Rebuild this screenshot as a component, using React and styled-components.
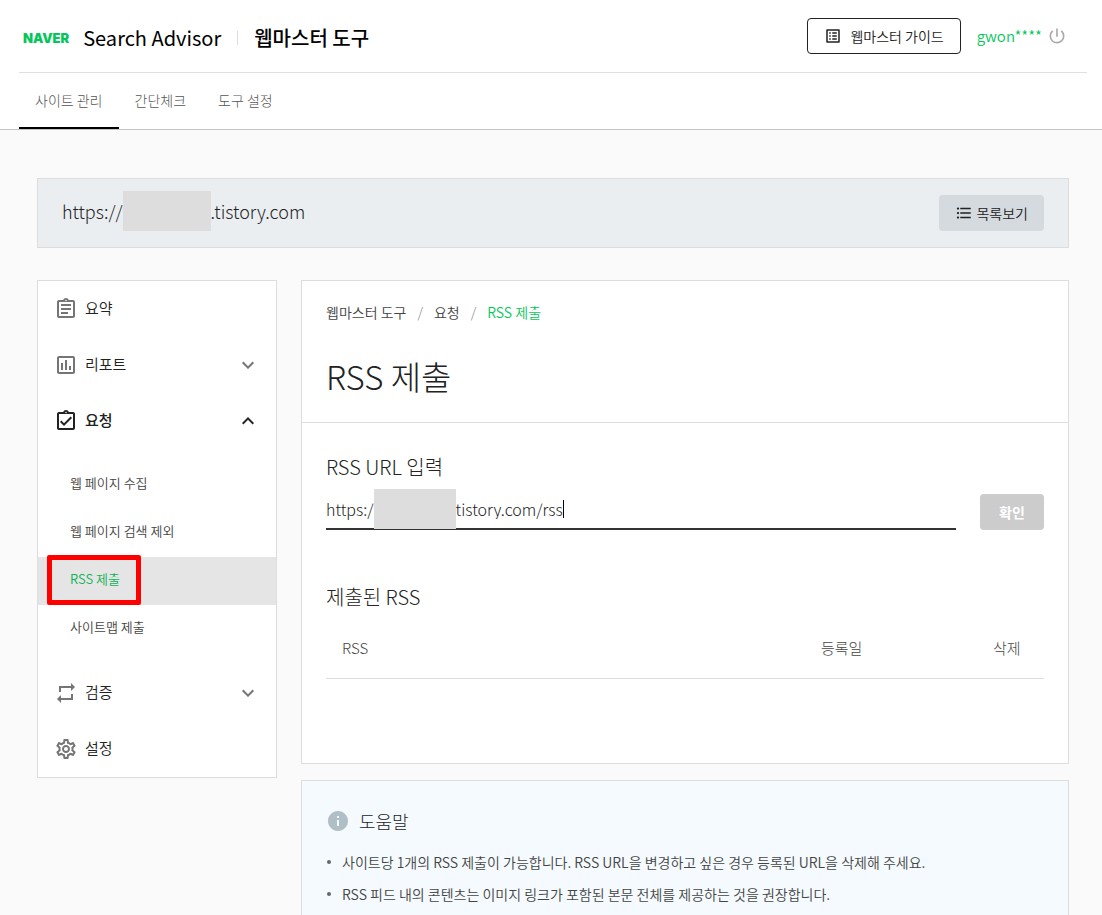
import React, { useState } from 'react';
import styled, { createGlobalStyle } from 'styled-components';
import {
  MdFormatListBulleted,
  MdInfo,
  MdKeyboardArrowDown,
  MdKeyboardArrowUp,
  MdListAlt,
  MdOutlineAssessment,
  MdOutlineAssignment,
  MdOutlineAssignmentTurnedIn,
  MdOutlineSettings,
  MdPowerSettingsNew,
  MdRepeat,
} from 'react-icons/md';

const tabs = ['사이트 관리', '간단체크', '도구 설정'];

const menu = [
  { label: '요약', icon: MdOutlineAssignment },
  { label: '리포트', icon: MdOutlineAssessment, group: true },
  {
    label: '요청',
    icon: MdOutlineAssignmentTurnedIn,
    group: true,
    children: ['웹 페이지 수집', '웹 페이지 검색 제외', 'RSS 제출', '사이트맵 제출'],
  },
  { label: '검증', icon: MdRepeat, group: true },
  { label: '설정', icon: MdOutlineSettings },
];

const tips = [
  '사이트당 1개의 RSS 제출이 가능합니다. RSS URL을 변경하고 싶은 경우 등록된 URL을 삭제해 주세요.',
  'RSS 피드 내의 콘텐츠는 이미지 링크가 포함된 본문 전체를 제공하는 것을 권장합니다.',
];

export default function App() {
  return (
    <>
      <GlobalStyle />
      <Header />
      <Content>
        <SiteBar>
          <SiteUrl>
            https://
            <Mask wide />
            .tistory.com
          </SiteUrl>
          <ListButton type="button">
            <MdFormatListBulleted size={18} />
            목록보기
          </ListButton>
        </SiteBar>
        <Columns>
          <Sidebar />
          <Main>
            <RssPanel />
            <Help />
          </Main>
        </Columns>
      </Content>
    </>
  );
}

function Header() {
  return (
    <HeaderWrap>
      <TopRow>
        <Brand>
          <Logo href="#">NAVER</Logo>
          <BrandLink href="#">Search Advisor</BrandLink>
          <Divider />
          <BrandLink href="#" strong>웹마스터 도구</BrandLink>
        </Brand>
        <Account>
          <GuideButton type="button">
            <MdListAlt size={18} />
            웹마스터 가이드
          </GuideButton>
          <UserLink href="#">gwon****</UserLink>
          <PowerButton type="button" aria-label="로그아웃">
            <MdPowerSettingsNew size={20} />
          </PowerButton>
        </Account>
      </TopRow>
      <Tabs>
        {tabs.map((tab, i) => (
          <Tab key={tab} href="#" active={i === 0}>{tab}</Tab>
        ))}
      </Tabs>
    </HeaderWrap>
  );
}

function Sidebar() {
  return (
    <Nav>
      {menu.map(({ label, icon: Icon, group, children }) => (
        <React.Fragment key={label}>
          <MenuItem type="button" open={!!children}>
            <Icon size={24} />
            <span>{label}</span>
            {group && (children ? <MdKeyboardArrowUp size={24} /> : <MdKeyboardArrowDown size={24} />)}
          </MenuItem>
          {children && (
            <SubMenu>
              {children.map(child => (
                <li key={child}>
                  <SubLink href="#" active={child === 'RSS 제출'}>
                    {child}
                    {child === 'RSS 제출' && <Marker />}
                  </SubLink>
                </li>
              ))}
            </SubMenu>
          )}
        </React.Fragment>
      ))}
    </Nav>
  );
}

function RssPanel() {
  const [url, setUrl] = useState('tistory.com/rss');
  return (
    <Panel>
      <PanelHead>
        <Crumbs>
          <li><Crumb href="#">웹마스터 도구</Crumb></li>
          <li><Crumb href="#">요청</Crumb></li>
          <li><Crumb href="#" current>RSS 제출</Crumb></li>
        </Crumbs>
        <Title>RSS 제출</Title>
      </PanelHead>
      <PanelBody>
        <FieldLabel htmlFor="rss-url">RSS URL 입력</FieldLabel>
        <FieldRow>
          <Field>
            <span>https:/</span>
            <Mask />
            <UrlInput id="rss-url" value={url} onChange={e => setUrl(e.target.value)} />
            <Caret />
          </Field>
          <ConfirmButton type="button">확인</ConfirmButton>
        </FieldRow>
        <SectionTitle>제출된 RSS</SectionTitle>
        <Table>
          <thead>
            <tr>
              <th>RSS</th>
              <DateCell>등록일</DateCell>
              <DeleteCell>삭제</DeleteCell>
            </tr>
          </thead>
        </Table>
      </PanelBody>
    </Panel>
  );
}

function Help() {
  return (
    <HelpPanel>
      <HelpTitle>
        <MdInfo size={24} />
        도움말
      </HelpTitle>
      <Tips>
        {tips.map(tip => <li key={tip}>{tip}</li>)}
      </Tips>
    </HelpPanel>
  );
}

const GlobalStyle = createGlobalStyle`
  * {
    box-sizing: border-box;
  }
  html {
    scrollbar-width: none;
  }
  body {
    margin: 0;
    background: #fafafa;
    color: #222;
    font-family: "Noto Sans CJK KR", sans-serif;
    font-size: 14px;
    font-weight: 300;
    line-height: 20px;
  }
  a {
    color: inherit;
    text-decoration: none;
  }
  button, input {
    padding: 0;
    border: 0;
    background: transparent;
    color: inherit;
    font: inherit;
  }
  button {
    cursor: pointer;
  }
  h1, h2, ul, ol {
    margin: 0;
    padding: 0;
    font-weight: inherit;
    list-style: none;
  }
`;

const HeaderWrap = styled.header`
  padding: 0 15px 0 19px;
  background: #fff;
  border-bottom: 1px solid #c4c4c4;
`;

const TopRow = styled.div`
  display: flex;
  align-items: center;
  justify-content: space-between;
  height: 73px;
  padding: 0 20px 0 4px;
  border-bottom: 1px solid #e0e0e0;
`;

const Brand = styled.div`
  display: flex;
  align-items: center;
  padding-top: 4px;
`;

const Logo = styled.a`
  margin-right: 14px;
  color: #03c75a;
  font-family: Inter, sans-serif;
  font-size: 13px;
  font-weight: 900;
`;

const BrandLink = styled.a`
  color: #000;
  font-size: 20px;
  font-weight: ${props => (props.strong ? 500 : 400)};
  line-height: 28px;
`;

const Divider = styled.span`
  width: 1px;
  height: 14px;
  margin: 0 16px;
  background: #ddd;
`;

const Account = styled.div`
  display: flex;
  align-items: center;
`;

const GuideButton = styled.button`
  display: flex;
  align-items: center;
  gap: 8px;
  height: 36px;
  padding: 0 16px;
  border: 1px solid #222;
  border-radius: 4px;
  font-weight: 350;
`;

const UserLink = styled.a`
  margin-left: 16px;
  color: #03c75a;
  font-size: 15px;
  font-weight: 350;
`;

const PowerButton = styled.button`
  display: flex;
  margin-left: 5px;
  color: #aaa;
`;

const Tabs = styled.nav`
  display: flex;
`;

const Tab = styled.a`
  height: 56px;
  padding: 0 16px;
  border-bottom: 2px solid ${props => (props.active ? '#000' : 'transparent')};
  color: #555;
  line-height: 54px;
`;

const Content = styled.div`
  padding: 48px 33px 24px 37px;
`;

const SiteBar = styled.div`
  display: flex;
  align-items: center;
  justify-content: space-between;
  height: 70px;
  padding: 0 24px;
  background: #eaeef1;
  border: 1px solid #ddd;
`;

const SiteUrl = styled.div`
  display: flex;
  align-items: center;
  padding-bottom: 4px;
  font-size: 18px;
`;

const Mask = styled.span`
  width: ${props => (props.wide ? 88 : 82)}px;
  height: 40px;
  background: #ddd;
`;

const ListButton = styled.button`
  display: flex;
  align-items: center;
  gap: 3px;
  height: 36px;
  padding: 0 16px;
  border-radius: 4px;
  background: #d5dade;
  font-weight: 350;
`;

const Columns = styled.div`
  display: flex;
  align-items: flex-start;
  gap: 24px;
  margin-top: 32px;
`;

const Nav = styled.nav`
  flex: 0 0 240px;
  background: #fff;
  border: 1px solid #ddd;
`;

const MenuItem = styled.button`
  display: flex;
  align-items: center;
  width: 100%;
  height: 56px;
  padding: 0 16px;
  font-size: 15px;
  font-weight: ${props => (props.open ? 500 : 350)};
  text-align: left;
  span {
    flex: 1;
    margin-left: 7px;
    padding-bottom: 3px;
  }
  svg {
    color: ${props => (props.open ? '#222' : '#757575')};
  }
`;

const SubMenu = styled.ul`
  padding: 12px 0;
`;

const SubLink = styled.a`
  display: block;
  position: relative;
  padding: 0 0 4px 32px;
  background: ${props => (props.active ? '#e5e5e5' : 'transparent')};
  color: ${props => (props.active ? '#0fb255' : '#444')};
  font-size: 13px;
  font-weight: 350;
  line-height: 44px;
`;

const Marker = styled.span`
  position: absolute;
  top: -2px;
  left: 9px;
  width: 94px;
  height: 50px;
  border: 5px solid #f00;
  border-radius: 2px;
`;

const Main = styled.main`
  flex: 1;
  min-width: 0;
`;

const Panel = styled.section`
  background: #fff;
  border: 1px solid #ddd;
`;

const PanelHead = styled.div`
  padding: 21px 24px 22px;
  border-bottom: 1px solid #ddd;
`;

const Crumbs = styled.ol`
  display: flex;
  li + li::before {
    content: "/";
    padding: 0 11px;
    color: #888;
  }
`;

const Crumb = styled.a`
  color: ${props => (props.current ? '#03c75a' : '#444')};
  font-weight: 350;
`;

const Title = styled.h1`
  margin-top: 30px;
  font-size: 33px;
  line-height: 48px;
`;

const PanelBody = styled.div`
  padding: 30px 24px 84px;
`;

const FieldLabel = styled.label`
  display: block;
  font-size: 20px;
  line-height: 28px;
`;

const FieldRow = styled.div`
  display: flex;
  align-items: flex-end;
  gap: 24px;
  margin-top: 8px;
`;

const Field = styled.div`
  display: flex;
  flex: 1;
  align-items: center;
  height: 41px;
  border-bottom: 2px solid #333;
  font-size: 16px;
`;

const UrlInput = styled.input`
  field-sizing: content;
  outline: none;
`;

const Caret = styled.span`
  width: 1px;
  height: 18px;
  background: #000;
`;

const ConfirmButton = styled.button`
  width: 64px;
  height: 36px;
  border-radius: 4px;
  background: #ccc;
  color: #fff;
  font-weight: 700;
`;

const SectionTitle = styled.h2`
  margin-top: 53px;
  font-size: 20px;
  line-height: 28px;
`;

const Table = styled.table`
  width: 100%;
  margin-top: 7px;
  border-collapse: collapse;
  th {
    height: 60px;
    padding: 0 16px;
    border-bottom: 1px solid #ddd;
    color: #444;
    font-size: 15px;
    font-weight: 300;
    text-align: left;
  }
`;

const DateCell = styled.th`
  width: 172px;
`;

const DeleteCell = styled.th`
  width: 67px;
  white-space: nowrap;
`;

const HelpPanel = styled.section`
  margin-top: 16px;
  padding: 24px;
  background: #f4fafd;
  border: 1px solid #ddd;
`;

const HelpTitle = styled.h2`
  display: flex;
  align-items: center;
  gap: 9px;
  font-size: 18px;
  line-height: 32px;
  svg {
    color: #b0bec5;
  }
`;

const Tips = styled.ul`
  margin-top: 9px;
  color: #444;
  font-weight: 350;
  line-height: 32px;
  li {
    display: flex;
    align-items: center;
    gap: 11px;
  }
  li::before {
    content: "";
    width: 4px;
    height: 4px;
    margin-left: 1px;
    border-radius: 50%;
    background: #666;
  }
`;
